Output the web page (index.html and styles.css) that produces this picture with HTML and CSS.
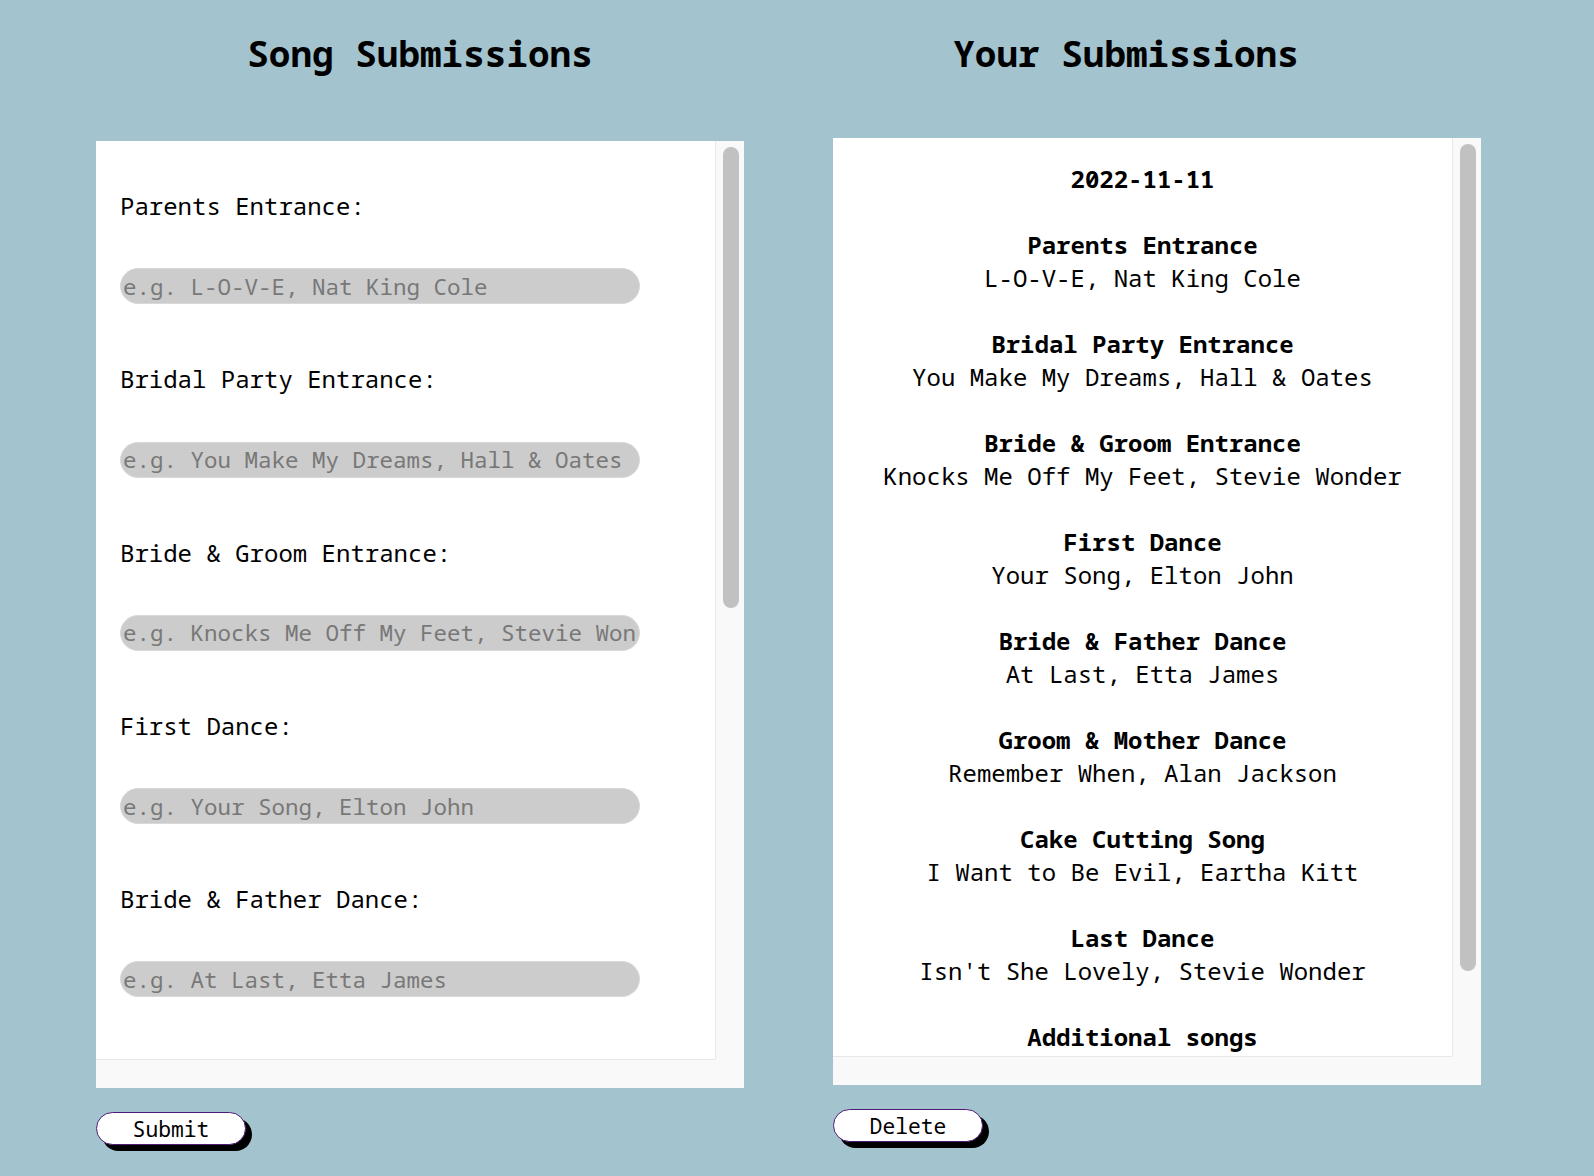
FILE: index.html
```html
<!DOCTYPE html>
<html lang="en">
<head>
<meta charset="utf-8">
<title>Song Submissions</title>
<link rel="stylesheet" href="styles.css">
</head>
<body>
<main class="page">
  <section class="column column-form">
    <h1 class="title">Song Submissions</h1>
    <form class="panel">
      <div class="panel-body form-body">
        <div class="field">
          <label class="field-label" for="f1">Parents Entrance:</label>
          <input class="field-input" id="f1" type="text" placeholder="e.g. L-O-V-E, Nat King Cole">
        </div>
        <div class="field">
          <label class="field-label" for="f2">Bridal Party Entrance:</label>
          <input class="field-input" id="f2" type="text" placeholder="e.g. You Make My Dreams, Hall &amp; Oates">
        </div>
        <div class="field">
          <label class="field-label" for="f3">Bride &amp; Groom Entrance:</label>
          <input class="field-input" id="f3" type="text" placeholder="e.g. Knocks Me Off My Feet, Stevie Wonder">
        </div>
        <div class="field">
          <label class="field-label" for="f4">First Dance:</label>
          <input class="field-input" id="f4" type="text" placeholder="e.g. Your Song, Elton John">
        </div>
        <div class="field">
          <label class="field-label" for="f5">Bride &amp; Father Dance:</label>
          <input class="field-input" id="f5" type="text" placeholder="e.g. At Last, Etta James">
        </div>
      </div>
      <div class="scroll-v"><div class="thumb thumb-form"></div></div>
      <div class="scroll-h"></div>
      <div class="scroll-corner"></div>
    </form>
    <div class="actions">
      <button class="pill-button" type="button">Submit</button>
    </div>
  </section>

  <section class="column column-list">
    <h1 class="title title-list">Your Submissions</h1>
    <div class="panel">
      <div class="panel-body list-body">
        <p class="date">2022-11-11</p>
        <div class="entry">
          <h3 class="entry-title">Parents Entrance</h3>
          <p class="entry-song">L-O-V-E, Nat King Cole</p>
        </div>
        <div class="entry">
          <h3 class="entry-title">Bridal Party Entrance</h3>
          <p class="entry-song">You Make My Dreams, Hall &amp; Oates</p>
        </div>
        <div class="entry">
          <h3 class="entry-title">Bride &amp; Groom Entrance</h3>
          <p class="entry-song">Knocks Me Off My Feet, Stevie Wonder</p>
        </div>
        <div class="entry">
          <h3 class="entry-title">First Dance</h3>
          <p class="entry-song">Your Song, Elton John</p>
        </div>
        <div class="entry">
          <h3 class="entry-title">Bride &amp; Father Dance</h3>
          <p class="entry-song">At Last, Etta James</p>
        </div>
        <div class="entry">
          <h3 class="entry-title">Groom &amp; Mother Dance</h3>
          <p class="entry-song">Remember When, Alan Jackson</p>
        </div>
        <div class="entry">
          <h3 class="entry-title">Cake Cutting Song</h3>
          <p class="entry-song">I Want to Be Evil, Eartha Kitt</p>
        </div>
        <div class="entry">
          <h3 class="entry-title">Last Dance</h3>
          <p class="entry-song">Isn't She Lovely, Stevie Wonder</p>
        </div>
        <div class="entry">
          <h3 class="entry-title">Additional songs</h3>
        </div>
      </div>
      <div class="scroll-v"><div class="thumb thumb-list"></div></div>
      <div class="scroll-h"></div>
      <div class="scroll-corner"></div>
    </div>
    <div class="actions">
      <button class="pill-button" type="button">Delete</button>
    </div>
  </section>
</main>
</body>
</html>
```

FILE: styles.css
```css
* {
  box-sizing: border-box;
}

html, body {
  margin: 0;
  padding: 0;
}

body {
  background: #a3c4cf;
  font-family: "Noto Sans Mono", "DejaVu Sans Mono", monospace;
  color: #000;
  min-height: 1176px;
}

.page {
  display: flex;
  align-items: flex-start;
  gap: 89px;
  padding-left: 96px;
}

.column {
  display: flex;
  flex-direction: column;
  width: 648px;
}

.title {
  margin: 0;
  padding-top: 29px;
  font-size: 36px;
  line-height: 49px;
  font-weight: 700;
  text-align: center;
}

.column-form .title {
  margin-bottom: 63px;
}

.title-list {
  margin-right: 62px;
  margin-bottom: 60px;
}

/* scroll box with its scrollbars */
.panel {
  display: grid;
  grid-template-columns: 1fr 29px;
  grid-template-rows: 1fr 29px;
  height: 947px;
  margin: 0;
  background: #fff;
}

.panel-body {
  overflow: hidden;
  min-height: 0;
}

.scroll-v {
  background: #f9f9f9;
  border-left: 1px solid #e8e8e8;
  padding: 6px 5px 0 7px;
}

.thumb {
  width: 16px;
  border-radius: 8px;
  background: #c1c1c1;
}

.thumb-form {
  height: 461px;
}

.thumb-list {
  height: 827px;
}

.scroll-h {
  background: #f9f9f9;
  border-top: 1px solid #e8e8e8;
}

.scroll-corner {
  background: #f9f9f9;
}

/* form panel */
.form-body {
  padding: 48px 24px 0;
}

.field {
  margin-bottom: 58px;
}

.field-label {
  display: block;
  font-size: 24px;
  line-height: 33px;
  margin-bottom: 46.3px;
}

.field-input {
  display: block;
  width: 520px;
  height: 36px;
  margin: 0;
  padding: 1px 2px;
  border: 1px solid #d9d9d9;
  border-radius: 18px;
  background: #cccccc;
  font-family: inherit;
  font-size: 22.5px;
  color: #000;
  outline: none;
}

.field-input::placeholder {
  color: #787878;
}

/* list panel */
.list-body {
  padding-top: 24px;
  text-align: center;
  font-size: 24px;
  line-height: 33px;
}

.date {
  margin: 0 0 33px;
  font-weight: 700;
}

.entry {
  margin-bottom: 33px;
}

.entry-title {
  margin: 0;
  font-size: 24px;
  font-weight: 700;
}

.entry-song {
  margin: 0;
}

/* buttons */
.actions {
  display: flex;
  padding-top: 24px;
}

.pill-button {
  width: 150px;
  height: 33px;
  padding: 0;
  border: 1px solid #4e1a78;
  border-radius: 17px;
  background: #fff;
  box-shadow: 6px 6px 0 #000;
  font-family: inherit;
  font-size: 21.33px;
  line-height: 30px;
  color: #000;
  cursor: pointer;
}
```
